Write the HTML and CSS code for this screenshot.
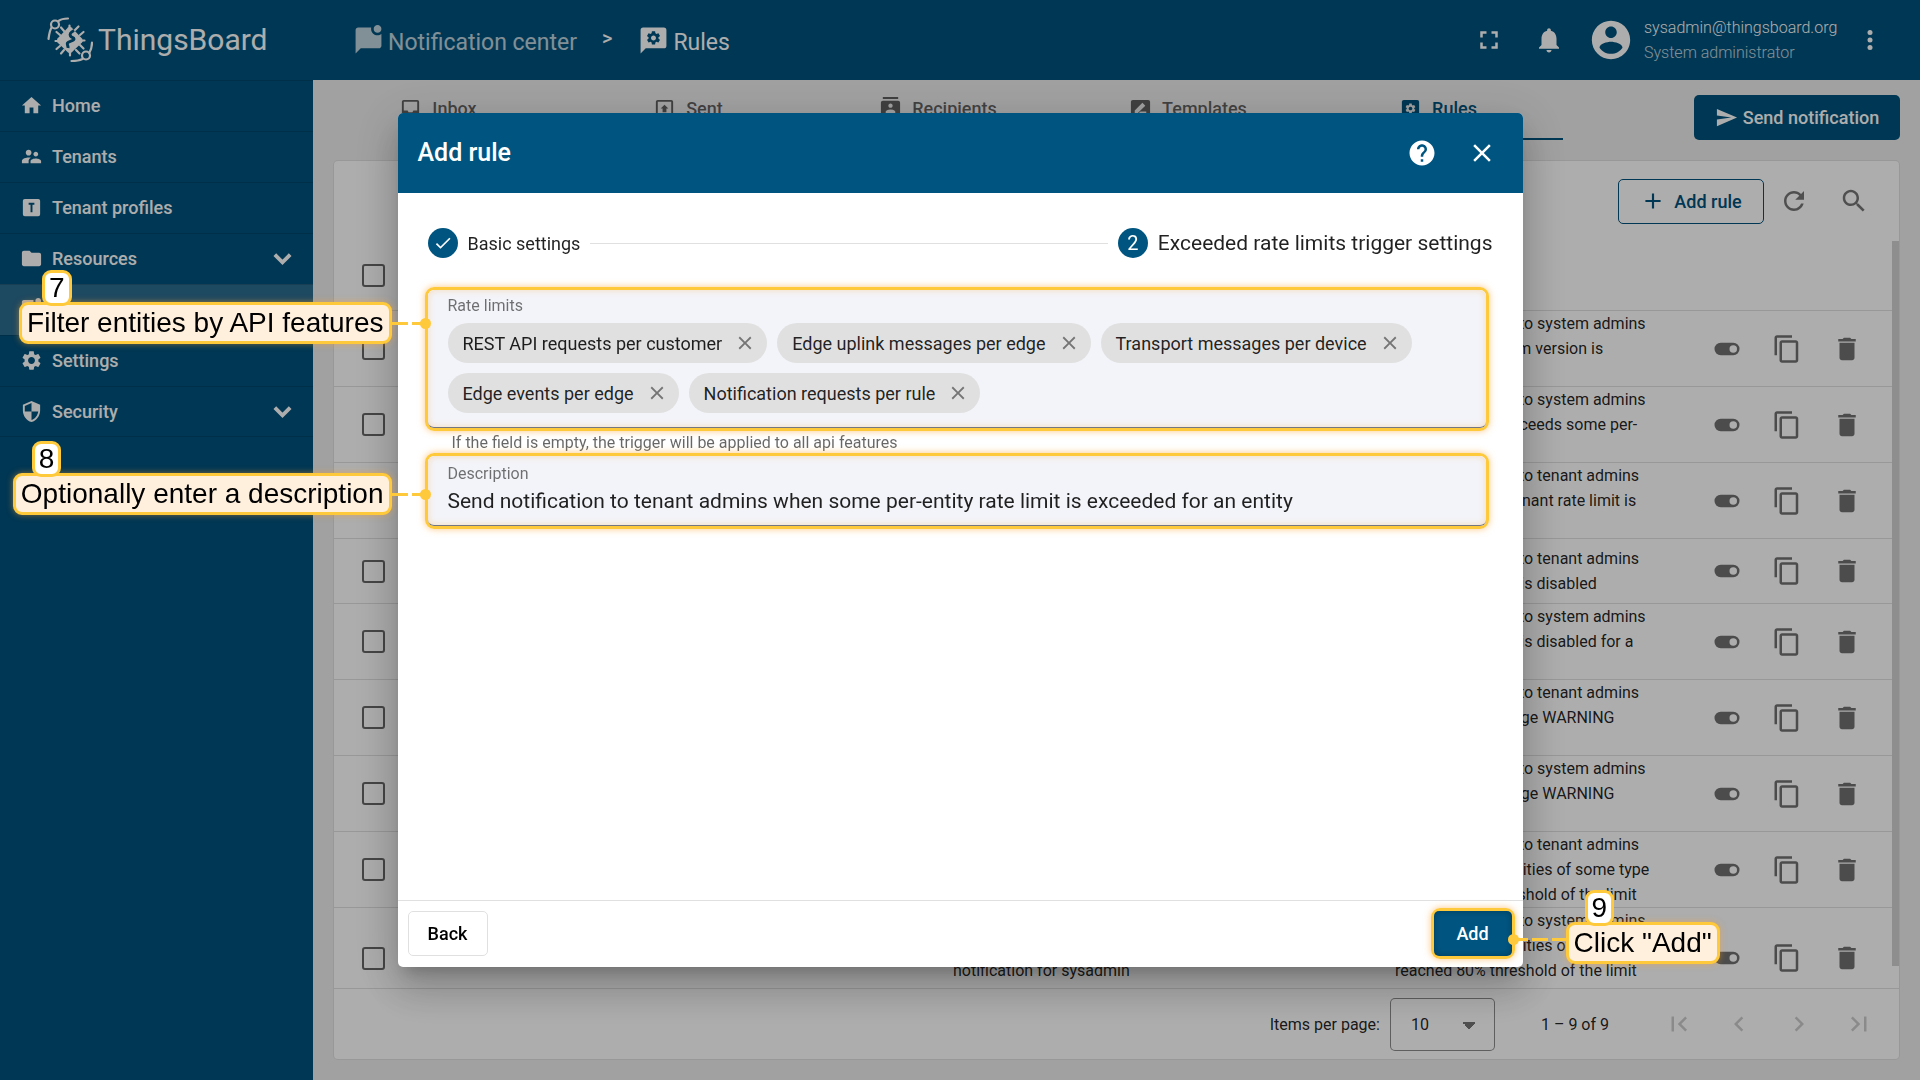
FILE: index.html
```
<!DOCTYPE html>
<html lang="en">
<head>
<meta charset="utf-8">
<title>ThingsBoard | Rules</title>
<link rel="stylesheet" href="styles.css">
</head>
<body>
<svg class="sprite" aria-hidden="true">
  <symbol id="i-home" viewBox="0 0 24 24"><path d="M10 20v-6h4v6h5v-8h3L12 3 2 12h3v8z"/></symbol>
  <symbol id="i-people" viewBox="0 0 24 24"><path d="M16.5 12c1.38 0 2.49-1.12 2.49-2.5S17.88 7 16.5 7C15.12 7 14 8.12 14 9.5s1.12 2.5 2.5 2.5zM9 11c1.66 0 2.99-1.34 2.99-3S10.66 5 9 5C7.34 5 6 6.34 6 8s1.34 3 3 3zm7.5 3c-1.83 0-5.5.92-5.5 2.75V19h11v-2.25c0-1.83-3.67-2.75-5.5-2.75zM9 13c-2.33 0-7 1.17-7 3.5V19h7v-2.25c0-.85.33-2.34 2.37-3.47C10.5 13.1 9.66 13 9 13z"/></symbol>
  <symbol id="i-tbox" viewBox="0 0 24 24"><path fill-rule="evenodd" d="M9 7v2h2v8h2V9h2V7H9M5 3h14a2 2 0 0 1 2 2v14a2 2 0 0 1-2 2H5a2 2 0 0 1-2-2V5a2 2 0 0 1 2-2z"/></symbol>
  <symbol id="i-folder" viewBox="0 0 24 24"><path d="M10 4H4c-1.1 0-2 .9-2 2v12c0 1.1.9 2 2 2h16c1.1 0 2-.9 2-2V8c0-1.1-.9-2-2-2h-8l-2-2z"/></symbol>
  <symbol id="i-chat" viewBox="0 0 24 24"><path d="M22 6.98V16c0 1.1-.9 2-2 2H6l-4 4V4c0-1.1.9-2 2-2h10.1c-.06.32-.1.66-.1 1 0 2.76 2.24 5 5 5 1.13 0 2.16-.39 3-1.02zM16 3c0 1.66 1.34 3 3 3s3-1.34 3-3-1.34-3-3-3-3 1.34-3 3z"/></symbol>
  <symbol id="i-gear" viewBox="0 0 24 24"><path d="M19.14 12.94c.04-.3.06-.61.06-.94 0-.32-.02-.64-.07-.94l2.03-1.58c.18-.14.23-.41.12-.61l-1.92-3.32c-.12-.22-.37-.29-.59-.22l-2.39.96c-.5-.38-1.03-.7-1.62-.94l-.36-2.54c-.04-.24-.24-.41-.48-.41h-3.84c-.24 0-.43.17-.47.41l-.36 2.54c-.59.24-1.13.57-1.62.94l-2.39-.96c-.22-.08-.47 0-.59.22L2.74 8.87c-.12.21-.08.47.12.61l2.03 1.58c-.05.3-.09.63-.09.94s.02.64.07.94l-2.03 1.58c-.18.14-.23.41-.12.61l1.92 3.32c.12.22.37.29.59.22l2.39-.96c.5.38 1.03.7 1.62.94l.36 2.54c.05.24.24.41.48.41h3.84c.24 0 .44-.17.47-.41l.36-2.54c.59-.24 1.13-.56 1.62-.94l2.39.96c.22.08.47 0 .59-.22l1.92-3.32c.12-.22.07-.47-.12-.61l-2.01-1.58zM12 15.6c-1.98 0-3.6-1.62-3.6-3.6s1.62-3.6 3.6-3.6 3.6 1.62 3.6 3.6-1.62 3.6-3.6 3.6z"/></symbol>
  <symbol id="i-shield" viewBox="0 0 24 24"><path d="M12 1 3 5v6c0 5.55 3.84 10.74 9 12 5.16-1.26 9-6.45 9-12V5l-9-4zm0 10.99h7c-.53 4.12-3.28 7.79-7 8.94V12H5V6.3l7-3.11v8.8z"/></symbol>
  <symbol id="i-chevron" viewBox="0 0 18 18"><path d="m3 6 6 6 6-6" fill="none" stroke="currentColor" stroke-width="3"/></symbol>
  <symbol id="i-msgcog" viewBox="0 0 24 24"><path d="M20 2H4a2 2 0 0 0-2 2v18l4-4h14a2 2 0 0 0 2-2V4a2 2 0 0 0-2-2z"/><use href="#i-gear" x="5.6" y="3.6" width="12.8" height="12.8" class="cut"/></symbol>
  <symbol id="i-fullscreen" viewBox="0 0 24 24"><path d="M7 14H5v5h5v-2H7v-3zm-2-4h2V7h3V5H5v5zm12 7h-3v2h5v-5h-2v3zM14 5v2h3v3h2V5h-5z"/></symbol>
  <symbol id="i-bell" viewBox="0 0 24 24"><path d="M12 22c1.1 0 2-.9 2-2h-4c0 1.1.89 2 2 2zm6-6v-5c0-3.07-1.64-5.64-4.5-6.32V4c0-.83-.67-1.5-1.5-1.5s-1.5.67-1.5 1.5v.68C7.63 5.36 6 7.92 6 11v5l-2 2v1h16v-1l-2-2z"/></symbol>
  <symbol id="i-account" viewBox="0 0 24 24"><path d="M12 2C6.48 2 2 6.48 2 12s4.48 10 10 10 10-4.48 10-10S17.52 2 12 2zm0 3c1.66 0 3 1.34 3 3s-1.34 3-3 3-3-1.34-3-3 1.34-3 3-3zm0 14.2c-2.5 0-4.71-1.28-6-3.22.03-1.99 4-3.08 6-3.08 1.99 0 5.97 1.09 6 3.08-1.29 1.94-3.5 3.22-6 3.22z"/></symbol>
  <symbol id="i-dots" viewBox="0 0 24 24"><circle cx="12" cy="6" r="2"/><circle cx="12" cy="12" r="2"/><circle cx="12" cy="18" r="2"/></symbol>
  <symbol id="i-inbox" viewBox="0 0 24 24"><path fill-rule="evenodd" d="M5 3h14a2 2 0 0 1 2 2v14a2 2 0 0 1-2 2H5a2 2 0 0 1-2-2V5a2 2 0 0 1 2-2zm0 2v9h4l1 2h4l1-2h4V5z"/></symbol>
  <symbol id="i-sent" viewBox="0 0 24 24"><path fill-rule="evenodd" d="M5 3h14a2 2 0 0 1 2 2v14a2 2 0 0 1-2 2H5a2 2 0 0 1-2-2V5a2 2 0 0 1 2-2zm0 2v14h14V5zm7 3 4 4h-2v4h-4v-4H8z"/></symbol>
  <symbol id="i-contacts" viewBox="0 0 24 24"><path d="M20 0H4v2h16V0zM4 24h16v-2H4v2zM20 4H4c-1.1 0-2 .9-2 2v12c0 1.1.9 2 2 2h16c1.1 0 2-.9 2-2V6c0-1.1-.9-2-2-2zm-8 2.75c1.24 0 2.25 1.01 2.25 2.25s-1.01 2.25-2.25 2.25S9.75 10.24 9.75 9 10.76 6.75 12 6.75zM17 17H7v-1.5c0-1.67 3.33-2.5 5-2.5s5 .83 5 2.5V17z"/></symbol>
  <symbol id="i-template" viewBox="0 0 24 24"><path fill-rule="evenodd" d="M4 3h16a2 2 0 0 1 2 2v14a2 2 0 0 1-2 2H4a2 2 0 0 1-2-2V5a2 2 0 0 1 2-2zm2 11v3h3l8-8-3-3zm6 1-2 2h8v-2z"/></symbol>
  <symbol id="i-cogbox" viewBox="0 0 24 24"><rect x="3" y="3" width="18" height="18" rx="2"/><use href="#i-gear" x="5.5" y="5.5" width="13" height="13" class="cut-light"/></symbol>
  <symbol id="i-send" viewBox="0 0 24 24"><path d="M2 21 23 12 2 3v7l15 2-15 2z"/></symbol>
  <symbol id="i-plus" viewBox="0 0 24 24"><path d="M19 13h-6v6h-2v-6H5v-2h6V5h2v6h6z"/></symbol>
  <symbol id="i-refresh" viewBox="0 0 24 24"><path d="M17.65 6.35C16.2 4.9 14.21 4 12 4c-4.42 0-7.99 3.58-7.99 8s3.57 8 7.99 8c3.73 0 6.84-2.55 7.73-6h-2.08c-.82 2.33-3.04 4-5.65 4-3.31 0-6-2.69-6-6s2.69-6 6-6c1.66 0 3.14.69 4.22 1.78L13 11h7V4l-2.35 2.35z"/></symbol>
  <symbol id="i-search" viewBox="0 0 24 24"><path d="M15.5 14h-.79l-.28-.27C15.41 12.59 16 11.11 16 9.5 16 5.91 13.09 3 9.5 3S3 5.91 3 9.5 5.91 16 9.5 16c1.61 0 3.09-.59 4.23-1.57l.27.28v.79l5 4.99L20.49 19l-4.99-5zm-6 0C7.01 14 5 11.99 5 9.5S7.01 5 9.5 5 14 7.01 14 9.5 11.99 14 9.5 14z"/></symbol>
  <symbol id="i-toggle" viewBox="0 0 24 24"><path d="M17 7H7a5 5 0 0 0 0 10h10a5 5 0 0 0 0-10m0 8a3 3 0 1 1 0-6 3 3 0 0 1 0 6z"/></symbol>
  <symbol id="i-copy" viewBox="0 0 24 24"><path d="M16 1H4c-1.1 0-2 .9-2 2v14h2V3h12V1zm3 4H8c-1.1 0-2 .9-2 2v14c0 1.1.9 2 2 2h11c1.1 0 2-.9 2-2V7c0-1.1-.9-2-2-2zm0 16H8V7h11v14z"/></symbol>
  <symbol id="i-delete" viewBox="0 0 24 24"><path d="M6 19c0 1.1.9 2 2 2h8c1.1 0 2-.9 2-2V7H6v12zM19 4h-3.5l-1-1h-5l-1 1H5v2h14V4z"/></symbol>
  <symbol id="i-first" viewBox="0 0 24 24"><path d="M18.41 16.59 13.82 12l4.59-4.59L17 6l-6 6 6 6zM6 6h2v12H6z"/></symbol>
  <symbol id="i-prev" viewBox="0 0 24 24"><path d="M15.41 7.41 14 6l-6 6 6 6 1.41-1.41L10.83 12z"/></symbol>
  <symbol id="i-next" viewBox="0 0 24 24"><path d="M10 6 8.59 7.41 13.17 12l-4.58 4.59L10 18l6-6z"/></symbol>
  <symbol id="i-last" viewBox="0 0 24 24"><path d="M5.59 7.41 10.18 12l-4.59 4.59L7 18l6-6-6-6zM16 6h2v12h-2z"/></symbol>
  <symbol id="i-help" viewBox="0 0 24 24"><path d="M12 2C6.48 2 2 6.48 2 12s4.48 10 10 10 10-4.48 10-10S17.52 2 12 2zm1 17h-2v-2h2v2zm2.07-7.75-.9.92C13.45 12.9 13 13.5 13 15h-2v-.5c0-1.1.45-2.1 1.17-2.83l1.24-1.26c.37-.36.59-.86.59-1.41 0-1.1-.9-2-2-2s-2 .9-2 2H8c0-2.21 1.79-4 4-4s4 1.79 4 4c0 .88-.36 1.68-.93 2.25z"/></symbol>
  <symbol id="i-close" viewBox="0 0 24 24"><path d="M19 6.41 17.59 5 12 10.59 6.41 5 5 6.41 10.59 12 5 17.59 6.41 19 12 13.41 17.59 19 19 17.59 13.41 12z"/></symbol>
  <symbol id="i-check" viewBox="0 0 24 24"><path d="M9 16.17 4.83 12l-1.42 1.41L9 19 21 7l-1.41-1.41z"/></symbol>
  <symbol id="i-logo" viewBox="0 0 46 46">
    <g fill="none" stroke="currentColor" stroke-width="2.2" stroke-linecap="round">
      <path d="M21 1.500c-4 0-7 .6-9.500 2.500M4.500 10.500C2.500 14 2 18 1.500 22"/><circle cx="8" cy="7.500" r="4"/>
      <path d="M45 25.500c0 4-.8 7-2.700 10.500M35.500 42c-3 1.500-7 2-11 2"/><circle cx="39" cy="38.500" r="4"/>
      <path d="m17 14-3-3.500M13 18l-3.500-3M28 13l3.500-3.500M33 18l3.500-3M11 24H8.500M13 29l-3.500 3M17 33l-3 3.500M29 33l3.500 3.500M33 28l3.500 3.500M23 36v2.500M22.500 11V8.500M35 23.500h2.500"/>
    </g>
    <path d="M21 10.500q1.800-1.500 3.600 0L35 21.500q1.500 2 0 4L24.600 35.500q-1.800 1.500-3.600 0L10.500 25.500q-1.500-2 0-4z"/>
    <path class="cut-stroke" d="M27 13.500c-4 2-4.500 3.500-3.500 5.500 1 2 3.500 1 3.500 3s-5.500 2-6.500 4c-.8 1.600.8 2.500.5 5"/>
  </symbol>
</svg>

<div class="app">
  <nav class="sidebar">
    <a class="logo" href="#"><svg><use href="#i-logo"/></svg><span>ThingsBoard</span></a>
    <a class="nav-item" href="#"><svg><use href="#i-home"/></svg><span>Home</span></a>
    <a class="nav-item" href="#"><svg><use href="#i-people"/></svg><span>Tenants</span></a>
    <a class="nav-item" href="#"><svg><use href="#i-tbox"/></svg><span>Tenant profiles</span></a>
    <a class="nav-item" href="#"><svg><use href="#i-folder"/></svg><span>Resources</span><svg class="chevron"><use href="#i-chevron"/></svg></a>
    <a class="nav-item active" href="#" aria-label="Notification center"><svg><use href="#i-chat"/></svg></a>
    <a class="nav-item" href="#"><svg><use href="#i-gear"/></svg><span>Settings</span></a>
    <a class="nav-item" href="#"><svg><use href="#i-shield"/></svg><span>Security</span><svg class="chevron"><use href="#i-chevron"/></svg></a>
  </nav>

  <div class="main">
    <header class="topbar">
      <a class="crumb muted" href="#"><svg><use href="#i-chat"/></svg><span>Notification center</span></a>
      <span class="crumb-sep">&gt;</span>
      <a class="crumb" href="#"><svg><use href="#i-msgcog"/></svg><span>Rules</span></a>
      <div class="top-actions">
        <button class="icon-btn" aria-label="Fullscreen"><svg><use href="#i-fullscreen"/></svg></button>
        <button class="icon-btn" aria-label="Notifications"><svg><use href="#i-bell"/></svg></button>
        <svg class="avatar"><use href="#i-account"/></svg>
        <div class="user"><span>sysadmin@thingsboard.org</span><span class="role">System administrator</span></div>
        <button class="icon-btn menu" aria-label="User menu"><svg><use href="#i-dots"/></svg></button>
      </div>
    </header>

    <div class="tabbar">
      <div class="tabs">
        <a class="tab" href="#"><svg><use href="#i-inbox"/></svg>Inbox</a>
        <a class="tab" href="#"><svg><use href="#i-sent"/></svg>Sent</a>
        <a class="tab" href="#"><svg><use href="#i-contacts"/></svg>Recipients</a>
        <a class="tab" href="#"><svg><use href="#i-template"/></svg>Templates</a>
        <a class="tab current" href="#"><svg><use href="#i-cogbox"/></svg>Rules</a>
      </div>
      <button class="btn-primary send"><svg><use href="#i-send"/></svg>Send notification</button>
    </div>

    <section class="card">
      <div class="card-tools">
        <button class="btn-outline"><svg><use href="#i-plus"/></svg>Add rule</button>
        <button class="icon-btn dark" aria-label="Refresh"><svg><use href="#i-refresh"/></svg></button>
        <button class="icon-btn dark" aria-label="Search"><svg><use href="#i-search"/></svg></button>
      </div>
      <div class="table-wrap">
        <div class="table-scroll">
          <table>
            <colgroup><col class="c-check"><col class="c-time"><col class="c-name"><col class="c-template"><col class="c-trigger"><col class="c-desc"><col class="c-actions"></colgroup>
            <thead><tr><th><input type="checkbox" aria-label="Select all"></th><th></th><th></th><th></th><th></th><th></th><th></th></tr></thead>
            <tbody>
              <tr><td><input type="checkbox" aria-label="Select rule 1"></td><td></td><td></td><td></td><td></td><td>Send notification to system admins<br>when new platform version is<br>available</td>
                <td class="actions"><button aria-label="Toggle"><svg><use href="#i-toggle"/></svg></button><button aria-label="Copy"><svg><use href="#i-copy"/></svg></button><button aria-label="Delete"><svg><use href="#i-delete"/></svg></button></td></tr>
              <tr><td><input type="checkbox" aria-label="Select rule 2"></td><td></td><td></td><td></td><td></td><td>Send notification to system admins<br>when resource exceeds some per-<br>tenant rate limit</td>
                <td class="actions"><button aria-label="Toggle"><svg><use href="#i-toggle"/></svg></button><button aria-label="Copy"><svg><use href="#i-copy"/></svg></button><button aria-label="Delete"><svg><use href="#i-delete"/></svg></button></td></tr>
              <tr><td><input type="checkbox" aria-label="Select rule 3"></td><td></td><td></td><td></td><td></td><td>Send notification to tenant admins<br>when some per-tenant rate limit is<br>exceeded</td>
                <td class="actions"><button aria-label="Toggle"><svg><use href="#i-toggle"/></svg></button><button aria-label="Copy"><svg><use href="#i-copy"/></svg></button><button aria-label="Delete"><svg><use href="#i-delete"/></svg></button></td></tr>
              <tr><td><input type="checkbox" aria-label="Select rule 4"></td><td></td><td></td><td></td><td></td><td>Send notification to tenant admins<br>when API feature is disabled</td>
                <td class="actions"><button aria-label="Toggle"><svg><use href="#i-toggle"/></svg></button><button aria-label="Copy"><svg><use href="#i-copy"/></svg></button><button aria-label="Delete"><svg><use href="#i-delete"/></svg></button></td></tr>
              <tr><td><input type="checkbox" aria-label="Select rule 5"></td><td></td><td></td><td></td><td></td><td>Send notification to system admins<br>when API feature is disabled for a<br>tenant</td>
                <td class="actions"><button aria-label="Toggle"><svg><use href="#i-toggle"/></svg></button><button aria-label="Copy"><svg><use href="#i-copy"/></svg></button><button aria-label="Delete"><svg><use href="#i-delete"/></svg></button></td></tr>
              <tr><td><input type="checkbox" aria-label="Select rule 6"></td><td></td><td></td><td></td><td></td><td>Send notification to tenant admins<br>when any API usage WARNING<br>state</td>
                <td class="actions"><button aria-label="Toggle"><svg><use href="#i-toggle"/></svg></button><button aria-label="Copy"><svg><use href="#i-copy"/></svg></button><button aria-label="Delete"><svg><use href="#i-delete"/></svg></button></td></tr>
              <tr><td><input type="checkbox" aria-label="Select rule 7"></td><td></td><td></td><td></td><td></td><td>Send notification to system admins<br>when any API usage WARNING<br>state</td>
                <td class="actions"><button aria-label="Toggle"><svg><use href="#i-toggle"/></svg></button><button aria-label="Copy"><svg><use href="#i-copy"/></svg></button><button aria-label="Delete"><svg><use href="#i-delete"/></svg></button></td></tr>
              <tr><td><input type="checkbox" aria-label="Select rule 8"></td><td></td><td></td><td></td><td></td><td>Send notification to tenant admins<br>when count of entities of some type<br>reached 80% threshold of the limit</td>
                <td class="actions"><button aria-label="Toggle"><svg><use href="#i-toggle"/></svg></button><button aria-label="Copy"><svg><use href="#i-copy"/></svg></button><button aria-label="Delete"><svg><use href="#i-delete"/></svg></button></td></tr>
              <tr><td><input type="checkbox" aria-label="Select rule 9"></td><td></td><td></td><td>Entities count limit<br>notification for sysadmin</td><td></td><td>Send notification to system admins<br>when count of entities of some type<br>reached 80% threshold of the limit<br>for a tenant</td>
                <td class="actions"><button aria-label="Toggle"><svg><use href="#i-toggle"/></svg></button><button aria-label="Copy"><svg><use href="#i-copy"/></svg></button><button aria-label="Delete"><svg><use href="#i-delete"/></svg></button></td></tr>
            </tbody>
          </table>
        </div>
        <div class="scroll-track"><div class="scroll-thumb"></div></div>
      </div>
      <footer class="paginator">
        <label for="page-size">Items per page:</label>
        <select id="page-size"><option>10</option><option>20</option><option>30</option></select>
        <span class="range">1 – 9 of 9</span>
        <div class="pager">
          <button disabled aria-label="First page"><svg><use href="#i-first"/></svg></button>
          <button disabled aria-label="Previous page"><svg><use href="#i-prev"/></svg></button>
          <button disabled aria-label="Next page"><svg><use href="#i-next"/></svg></button>
          <button disabled aria-label="Last page"><svg><use href="#i-last"/></svg></button>
        </div>
      </footer>
    </section>
  </div>
</div>

<div class="backdrop">
  <div class="dialog" role="dialog" aria-labelledby="dlg-title">
    <header class="dialog-head">
      <h2 id="dlg-title">Add rule</h2>
      <button class="icon-btn" aria-label="Help"><svg><use href="#i-help"/></svg></button>
      <button class="icon-btn" aria-label="Close"><svg><use href="#i-close"/></svg></button>
    </header>
    <div class="dialog-body">
      <div class="stepper">
        <span class="step-dot"><svg><use href="#i-check"/></svg></span><span class="step-label">Basic settings</span>
        <span class="step-line"></span>
        <span class="step-dot">2</span><span class="step-label current">Exceeded rate limits trigger settings</span>
      </div>

      <div class="mark">
        <div class="field" role="group" aria-labelledby="limits-label">
          <span class="field-label" id="limits-label">Rate limits</span>
          <div class="chips">
            <span class="chip">REST API requests per customer<button aria-label="Remove"><svg><use href="#i-close"/></svg></button></span>
            <span class="chip">Edge uplink messages per edge<button aria-label="Remove"><svg><use href="#i-close"/></svg></button></span>
            <span class="chip">Transport messages per device<button aria-label="Remove"><svg><use href="#i-close"/></svg></button></span>
            <span class="chip">Edge events per edge<button aria-label="Remove"><svg><use href="#i-close"/></svg></button></span>
            <span class="chip">Notification requests per rule<button aria-label="Remove"><svg><use href="#i-close"/></svg></button></span>
          </div>
        </div>
        <div class="callout left limits"><span class="num">7</span><span class="note">Filter entities by API features</span></div>
      </div>
      <p class="hint">If the field is empty, the trigger will be applied to all api features</p>
      <div class="mark">
        <div class="field text">
          <label class="field-label" for="desc">Description</label>
          <input id="desc" type="text" value="Send notification to tenant admins when some per-entity rate limit is exceeded for an entity">
        </div>
        <div class="callout left description"><span class="num">8</span><span class="note">Optionally enter a description</span></div>
      </div>
    </div>
    <footer class="dialog-foot">
      <button class="btn-plain">Back</button>
      <div class="mark">
        <button class="btn-primary add">Add</button>
        <div class="callout right"><span class="num">9</span><span class="note">Click "Add"</span></div>
      </div>
    </footer>
  </div>
</div>
</body>
</html>
```
FILE: styles.css
```
:root {
  --primary: #00527c;
  --dialog: #005580;
  --yellow: #ffc93c;
  --page: #eeeeee;
  --line: rgba(0, 0, 0, .12);
}
* { box-sizing: border-box; }
body {
  margin: 0;
  height: 100vh;
  overflow: hidden;
  font: 400 16px/25px Roboto, sans-serif;
  color: rgba(0, 0, 0, .87);
}
a { color: inherit; text-decoration: none; }
button { border: 0; background: none; padding: 0; color: inherit; font: inherit; }
svg { fill: currentColor; flex: none; display: block; }
.sprite { position: absolute; width: 0; height: 0; }
.cut { fill: var(--primary); }
.cut-light { fill: var(--page); }
.cut-stroke { fill: none; stroke: var(--primary); stroke-width: 3; }

.app { display: grid; grid-template-columns: 313px 1fr; height: 100%; background: var(--page); }

/* Sidebar */
.sidebar { background: var(--primary); color: #fff; display: flex; flex-direction: column; }
.logo {
  height: 80px;
  padding: 0 0 1px 47px;
  display: flex;
  align-items: center;
  gap: 5px;
  font-size: 30px;
}
.logo svg { width: 46px; height: 46px; }
.nav-item {
  height: 51px;
  padding: 0 19px 1px 20px;
  display: flex;
  align-items: center;
  gap: 9px;
  font-size: 18px;
  font-weight: 500;
  border-top: 1px solid rgba(0, 0, 0, .12);
}
.nav-item:last-child { border-bottom: 1px solid rgba(0, 0, 0, .12); }
.nav-item svg { width: 23px; height: 23px; }
.nav-item .chevron { margin-left: auto; }
.nav-item.active { background: #2c6c8f; }

/* Top bar */
.main { display: flex; flex-direction: column; min-width: 0; min-height: 0; }
.topbar {
  height: 80px;
  flex: none;
  padding-left: 40px;
  display: flex;
  align-items: center;
  background: var(--primary);
  color: #fff;
}
.crumb { display: flex; align-items: center; gap: 4px; font-size: 23px; }
.crumb svg { width: 31px; height: 31px; }
.crumb span { padding-top: 4px; }
.crumb.muted { opacity: .75; }
.crumb-sep { font-size: 20px; font-weight: 500; margin: 0 26px 0 25px; padding-bottom: 3px; }
.top-actions { margin-left: auto; display: flex; align-items: center; }
.icon-btn { width: 60px; height: 60px; display: flex; align-items: center; justify-content: center; }
.icon-btn svg { width: 30px; height: 30px; }
.icon-btn.menu { width: 40px; margin: 0 30px 0 10px; }
.icon-btn.dark { color: rgba(0, 0, 0, .54); }
.avatar { width: 46px; height: 46px; margin: 0 10px 0 9px; }
.user { min-width: 196px; display: flex; flex-direction: column; font-size: 16px; font-weight: 300; padding-bottom: 1px; }
.role { opacity: .75; }

/* Tabs */
.tabbar { display: flex; align-items: flex-end; justify-content: space-between; height: 60px; flex: none; padding-right: 20px; }
.tabs { display: flex; flex: 0 1 1250px; height: 60px; }
.tab {
  flex: 1;
  padding-bottom: 3px;
  display: flex;
  align-items: center;
  justify-content: center;
  gap: 10px;
  font-size: 18px;
  font-weight: 500;
  color: rgba(0, 0, 0, .6);
}
.tab svg { width: 23px; height: 23px; }
.tab.current { color: var(--primary); box-shadow: inset 0 -2px var(--primary); }
.btn-primary {
  height: 45px;
  border-radius: 5px;
  background: var(--primary);
  color: #fff;
  font-size: 18px;
  font-weight: 500;
  display: flex;
  align-items: center;
  justify-content: center;
  gap: 5px;
}
.send { width: 206px; }
.send svg { width: 23px; height: 23px; }

/* Card with the rules table */
.card {
  flex: 1;
  min-height: 0;
  margin: 20px;
  background: #fff;
  border: 1px solid var(--line);
  border-radius: 5px;
  display: flex;
  flex-direction: column;
}
.card-tools { height: 80px; flex: none; display: flex; align-items: center; justify-content: flex-end; padding-right: 15px; }
.btn-outline {
  width: 146px;
  height: 45px;
  border: 1px solid var(--primary);
  border-radius: 5px;
  color: var(--primary);
  font-size: 18px;
  font-weight: 500;
  display: flex;
  align-items: center;
  justify-content: center;
  gap: 8px;
}
.btn-outline svg { width: 26px; height: 26px; }
.table-wrap { flex: 1; min-height: 0; display: flex; }
.table-scroll { flex: 1; overflow: hidden; }
.scroll-track { width: 7px; }
.scroll-thumb { height: 97%; background: #d2d2d2; }
table { width: 100%; table-layout: fixed; border-collapse: separate; border-spacing: 0; }
.c-check { width: 60px; }
.c-time { width: 16%; }
.c-template { width: 221px; }
.c-trigger { width: 221px; }
.c-desc { width: 302px; }
.c-actions { width: 195px; }
th, td { padding: 0; border-bottom: 1px solid var(--line); text-align: left; }
th { height: 70px; }
td { height: 65px; }
th:first-child, td:first-child { padding-left: 28px; }
input[type="checkbox"] {
  appearance: none;
  display: block;
  width: 23px;
  height: 23px;
  margin: 0;
  border: 2px solid rgba(0, 0, 0, .6);
  border-radius: 3px;
}
.actions button { display: inline-flex; width: 60px; justify-content: center; vertical-align: middle; color: rgba(0, 0, 0, .56); }
.actions svg { width: 30px; height: 30px; }

.paginator {
  height: 71px;
  flex: none;
  display: flex;
  align-items: center;
  justify-content: flex-end;
  padding-right: 10px;
  border-top: 1px solid var(--line);
}
.paginator label { margin-right: 10px; }
#page-size {
  appearance: none;
  width: 105px;
  height: 53px;
  padding: 0 20px;
  border: 1px solid rgba(0, 0, 0, .45);
  border-radius: 5px;
  font: inherit;
  color: inherit;
  background:
    linear-gradient(to top right, transparent 50%, rgba(0, 0, 0, .54) 50%) 71px 23px / 7px 7px no-repeat,
    linear-gradient(to top left, transparent 50%, rgba(0, 0, 0, .54) 50%) 78px 23px / 7px 7px no-repeat;
}
.range { margin: 0 40px 0 46px; }
.pager { display: flex; color: rgba(0, 0, 0, .2); }
.pager button { width: 60px; display: flex; justify-content: center; }
.pager svg { width: 30px; height: 30px; }

/* Dialog */
.backdrop {
  position: fixed;
  inset: 0;
  display: grid;
  place-items: center;
  background: rgba(0, 0, 0, .32);
}
.dialog {
  width: min(1125px, 80vw);
  height: 79vh;
  display: flex;
  flex-direction: column;
  background: #fff;
  border-radius: 5px;
  box-shadow: 0 11px 15px -7px rgba(0, 0, 0, .2), 0 24px 38px 3px rgba(0, 0, 0, .14), 0 9px 46px 8px rgba(0, 0, 0, .12);
}
.dialog-head {
  height: 80px;
  flex: none;
  padding: 0 11px 0 20px;
  display: flex;
  align-items: center;
  background: var(--dialog);
  color: #fff;
  border-radius: 5px 5px 0 0;
}
.dialog-head h2 { flex: 1; margin: 0; padding-bottom: 2px; font-size: 25px; font-weight: 500; }
.dialog-body { flex: 1; padding: 35px 34px 0 27px; }
.stepper { display: flex; align-items: center; height: 30px; margin: 0 -4px 29px 3px; }
.step-dot {
  width: 30px;
  height: 30px;
  flex: none;
  border-radius: 50%;
  background: var(--dialog);
  color: #fff;
  font-size: 20px;
  display: flex;
  align-items: center;
  justify-content: center;
}
.step-dot svg { width: 20px; height: 20px; }
.step-label { margin-left: 10px; font-size: 18px; }
.step-label.current { font-size: 21px; }
.step-line { flex: 1; height: 1px; margin: 0 10px; background: #e0e0e0; }

.mark {
  position: relative;
  border: 3px solid var(--yellow);
  border-radius: 9px;
  box-shadow: 0 0 7px rgba(255, 160, 40, .6);
}
.field {
  padding: 6px 20px 0;
  background: #f3f4f9;
  border-bottom: 1px solid #757780;
  border-radius: 6px;
  box-shadow: inset 0 0 7px rgba(255, 160, 40, .3);
}
.field.text { padding-top: 8px; }
.field-label { display: block; font-size: 16px; line-height: 20px; color: rgba(0, 0, 0, .55); }
.chips { display: flex; flex-wrap: wrap; gap: 10px; padding: 7px 0 14px; }
.chip {
  height: 40px;
  padding: 0 11px 0 15px;
  display: flex;
  align-items: center;
  gap: 12px;
  border-radius: 20px;
  background: #e0e0e0;
  font-size: 18px;
}
.chip svg { width: 22px; height: 22px; color: #757575; }
.hint { margin: 0; padding: 2px 27px 0; font-size: 16px; line-height: 20px; color: rgba(0, 0, 0, .6); }
#desc {
  display: block;
  width: 100%;
  height: 41px;
  padding: 0 0 8px;
  border: 0;
  background: none;
  color: inherit;
  font: 400 21px Roboto, sans-serif;
}
.dialog-foot {
  height: 67px;
  flex: none;
  padding: 0 8px 0 10px;
  display: flex;
  align-items: center;
  justify-content: space-between;
  border-top: 1px solid #e0e0e0;
}
.btn-plain { width: 80px; height: 45px; border: 1px solid #e0e0e0; border-radius: 5px; font-size: 18px; font-weight: 500; color: #000; }
.add { width: 78px; background: var(--dialog); box-shadow: inset 0 0 7px rgba(0, 0, 0, .3); }

/* Numbered notes tied to a highlighted control by a dashed line */
.callout { position: absolute; display: flex; flex-direction: column; align-items: flex-start; color: #000; font: 28px/32px "Liberation Sans", Arial, sans-serif; white-space: nowrap; }
.callout.left { right: calc(100% + 36px); }
.callout.right { left: calc(100% + 54px); top: -21px; }
.limits { top: -20px; }
.description { top: -15px; }
.num { margin: 0 0 -4px 19px; padding: 0 4px; line-height: 30px; background: #fff; border: 3px solid var(--yellow); border-radius: 9px; z-index: 1; }
.limits .num { margin-left: 23px; }
.note { padding: 2px 5px; background: #fff0de; border: 3px solid var(--yellow); border-radius: 9px; box-shadow: 0 0 6px rgba(255, 160, 40, .5); }
.callout::before {
  content: "";
  position: absolute;
  top: 52px;
  left: 100%;
  width: 33px;
  height: 3px;
  background: repeating-linear-gradient(to right, var(--yellow) 0 16px, transparent 16px 20px);
}
.callout::after {
  content: "";
  position: absolute;
  top: 48px;
  left: calc(100% + 28px);
  width: 11px;
  height: 11px;
  border-radius: 50%;
  background: var(--yellow);
}
.callout.right::before { left: auto; right: 100%; width: 54px; top: 48px; }
.callout.right::after { left: -58px; top: 44px; }
```
